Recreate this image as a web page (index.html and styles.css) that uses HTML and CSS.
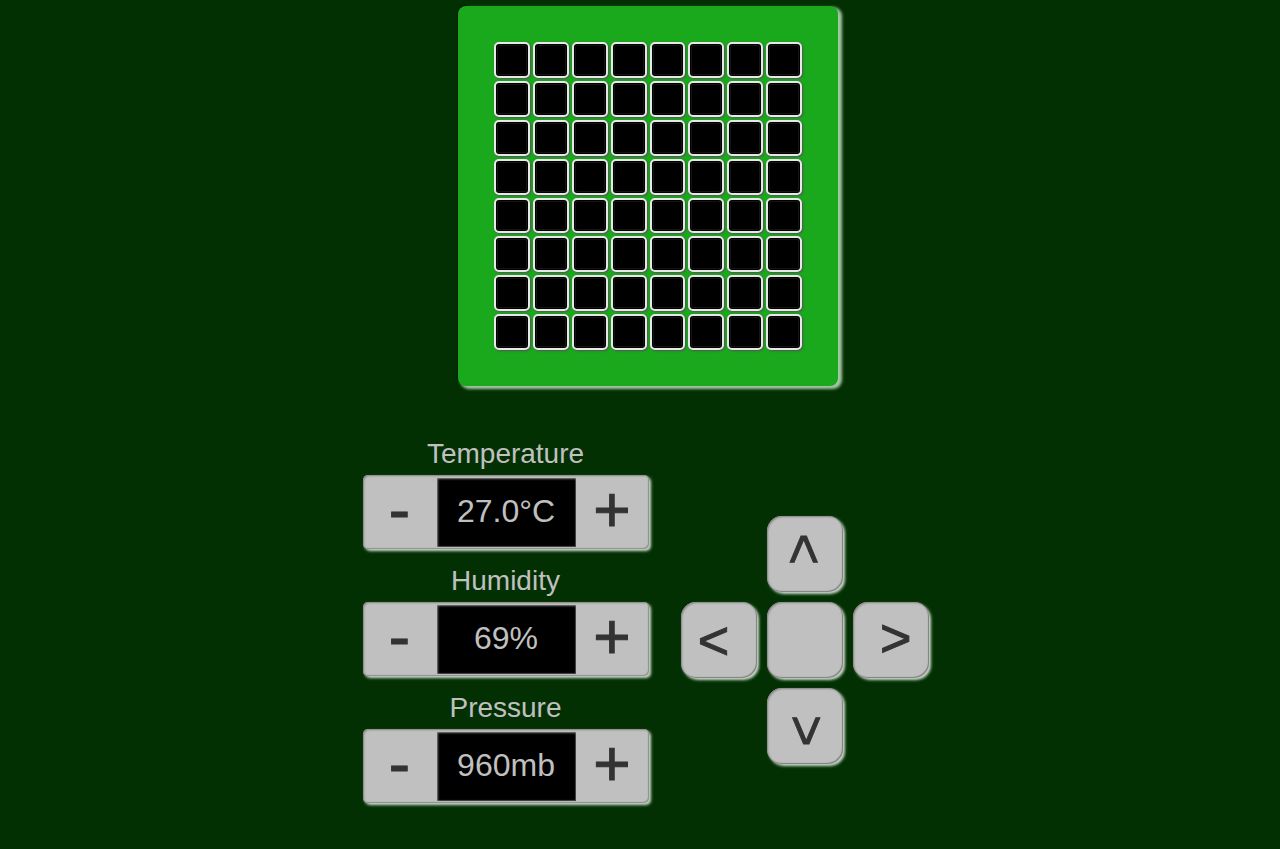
FILE: index.html
```html
<!DOCTYPE html>
<html lang="en">
<head>
<meta charset="utf-8">
<title>Sensor board</title>
<link rel="stylesheet" href="styles.css">
</head>
<body>
<main class="page">
  <div class="board" id="board"></div>
  <div class="controls">
    <div class="sensors">
      <section class="sensor">
        <h2 class="sensor-label" id="temp">Temperature</h2>
        <div class="stepper" role="group" aria-labelledby="temp">
          <button class="step" type="button">-</button>
          <output class="value">27.0°C</output>
          <button class="step" type="button">+</button>
        </div>
      </section>
      <section class="sensor">
        <h2 class="sensor-label" id="hum">Humidity</h2>
        <div class="stepper" role="group" aria-labelledby="hum">
          <button class="step" type="button">-</button>
          <output class="value">69%</output>
          <button class="step" type="button">+</button>
        </div>
      </section>
      <section class="sensor">
        <h2 class="sensor-label" id="press">Pressure</h2>
        <div class="stepper" role="group" aria-labelledby="press">
          <button class="step" type="button">-</button>
          <output class="value">960mb</output>
          <button class="step" type="button">+</button>
        </div>
      </section>
    </div>
    <div class="joystick">
      <button class="key key-up" type="button" aria-label="Up"><span class="arrow">&lt;</span></button>
      <button class="key key-left" type="button" aria-label="Left"><span class="arrow">&lt;</span></button>
      <button class="key key-middle" type="button" aria-label="Middle"></button>
      <button class="key key-right" type="button" aria-label="Right"><span class="arrow">&lt;</span></button>
      <button class="key key-down" type="button" aria-label="Down"><span class="arrow">&lt;</span></button>
    </div>
  </div>
</main>
<script src="board.js"></script>
</body>
</html>
```
FILE: styles.css
```css
* { box-sizing: border-box; }

body {
  margin: 0;
  background: #023002;
  color: #c0c0c0;
  font-family: "Liberation Sans", Arial, sans-serif;
}

.page {
  display: flex;
  flex-direction: column;
  align-items: center;
  padding: 6px 0 40px 16px;
}

.board {
  display: grid;
  grid-template-columns: repeat(8, 1fr);
  gap: 3px;
  width: 380px;
  padding: 36px;
  aspect-ratio: 1;
  border-radius: 8px;
  background: #1aa81c;
  box-shadow: 3px 2px 3px 1px #a4c8a4, -1px -1px 1px #001a00;
}

.led {
  border: 2px solid #e8e8e8;
  border-radius: 5px;
  background: #000;
  box-shadow: 1px 1px 2px #555, inset 0 0 0 1px #000, inset 0 0 0 2px #141414;
}

.controls {
  display: flex;
  align-items: center;
  gap: 32px;
  margin: 52px 5px 0 0;
}

.sensors {
  display: flex;
  flex-direction: column;
  gap: 16px;
}

.sensor-label {
  margin: 0 0 5px;
  font-size: 28px;
  font-weight: 400;
  line-height: 32px;
  text-align: center;
}

.stepper {
  display: flex;
  height: 74px;
  border-radius: 5px;
  background: #c0c0c0;
  box-shadow: 2px 2px 3px #d0dcd0, inset 1px 1px 2px #808080, inset -1px -1px 1px #909090;
}

.step,
.key {
  display: flex;
  align-items: center;
  justify-content: center;
  padding: 0;
  border: 0;
  color: #333;
  font-family: inherit;
  -webkit-text-stroke: 1px #333;
}

.step {
  width: 74px;
  padding-bottom: 4px;
  background: none;
  font-size: 64px;
  line-height: 70px;
}

.step:last-child { width: 73px; }

.value {
  width: 139px;
  margin: 3px 0 2px;
  background: #000;
  font-size: 32px;
  line-height: 66px;
  text-align: center;
  box-shadow: inset 1px 1px 2px #808080, inset -1px -1px 1px #444;
}

.joystick {
  display: grid;
  grid-template-columns: repeat(3, 76px);
  grid-template-rows: repeat(3, 76px);
  grid-template-areas: ". up ." "left middle right" ". down .";
  gap: 10px;
  padding-top: 38px;
}

.key {
  border-radius: 15px;
  background: #c0c0c0;
  font-size: 54px;
  line-height: 62px;
  box-shadow: 2px 2px 3px #d0dcd0, inset 1px 1px 2px #808080, inset -1px -1px 1px #808080;
}

.arrow { padding-right: 10px; }

.key-up { grid-area: up; }
.key-left { grid-area: left; }
.key-middle { grid-area: middle; }
.key-right { grid-area: right; }
.key-down { grid-area: down; }
.key-up .arrow { transform: rotate(90deg); }
.key-right .arrow { transform: rotate(180deg); }
.key-down .arrow { transform: rotate(-90deg); }
```
FILE: board.js
```js
const board = document.getElementById("board");
for (let i = 0; i < 64; i++) {
  const led = document.createElement("div");
  led.className = "led";
  board.append(led);
}
```
